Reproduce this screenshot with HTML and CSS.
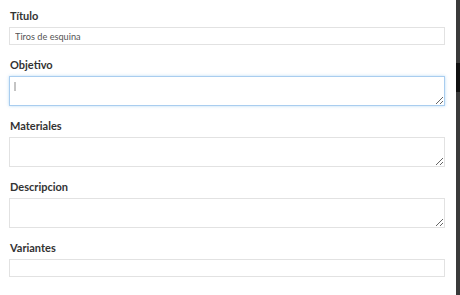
FILE: index.html
```html
<!DOCTYPE html>
<html lang="es">
<head>
  <meta charset="UTF-8" />
  <title>Ejercicio</title>
  <link rel="stylesheet" href="styles.css">
</head>
<body>
  <div class="page">
    <form class="form">
      <label class="label first" for="titulo">Título</label>
      <input class="field" type="text" id="titulo" value="Tiros de esquina" />

      <label class="label" for="objetivo">Objetivo</label>
      <div class="caret-wrap">
        <textarea class="field area focused" id="objetivo"></textarea>
        <span class="caret"></span>
      </div>

      <label class="label" for="materiales">Materiales</label>
      <textarea class="field area" id="materiales"></textarea>

      <label class="label" for="descripcion">Descripcion</label>
      <textarea class="field area" id="descripcion"></textarea>

      <label class="label" for="variantes">Variantes</label>
      <input class="field" type="text" id="variantes" />
    </form>

    <div class="scroll">
      <div class="thumb"></div>
    </div>
  </div>
</body>
</html>
```

FILE: styles.css
```css
html, body {
  margin: 0;
  padding: 0;
  background: #fff;
}

body {
  font-family: Lato, 'Open Sans', sans-serif;
  color: #333;
}

.page {
  display: flex;
  height: 295px;
  overflow: hidden;
}

.form {
  flex: 1;
  padding: 0 11px 0 9px;
}

.label {
  display: block;
  font-size: 11px;
  font-weight: bold;
  color: #333;
  line-height: 14px;
  margin: 13px 0 4px 1px;
}

.label.first {
  margin-top: 9px;
}

.field {
  display: block;
  box-sizing: border-box;
  width: 100%;
  height: 18px;
  margin: 0;
  padding: 0 5px;
  border: 1px solid #e2e2e2;
  border-radius: 0;
  font-family: Lato, 'Open Sans', sans-serif;
  font-size: 9.2px;
  color: #555;
  background: #fff;
  outline: none;
}

.area {
  height: 30px;
  resize: vertical;
}

.caret-wrap {
  position: relative;
}

.focused {
  border-color: #a9cdef;
  box-shadow: 0 0 3px rgba(102, 175, 233, 0.45);
}

.caret {
  position: absolute;
  left: 5px;
  top: 6px;
  width: 1.5px;
  height: 9px;
  background: #c4c4c4;
}

.scroll {
  width: 4px;
  background: #3a3a3a;
}

.thumb {
  margin-top: 63px;
  height: 29px;
  background: #111;
}
```
